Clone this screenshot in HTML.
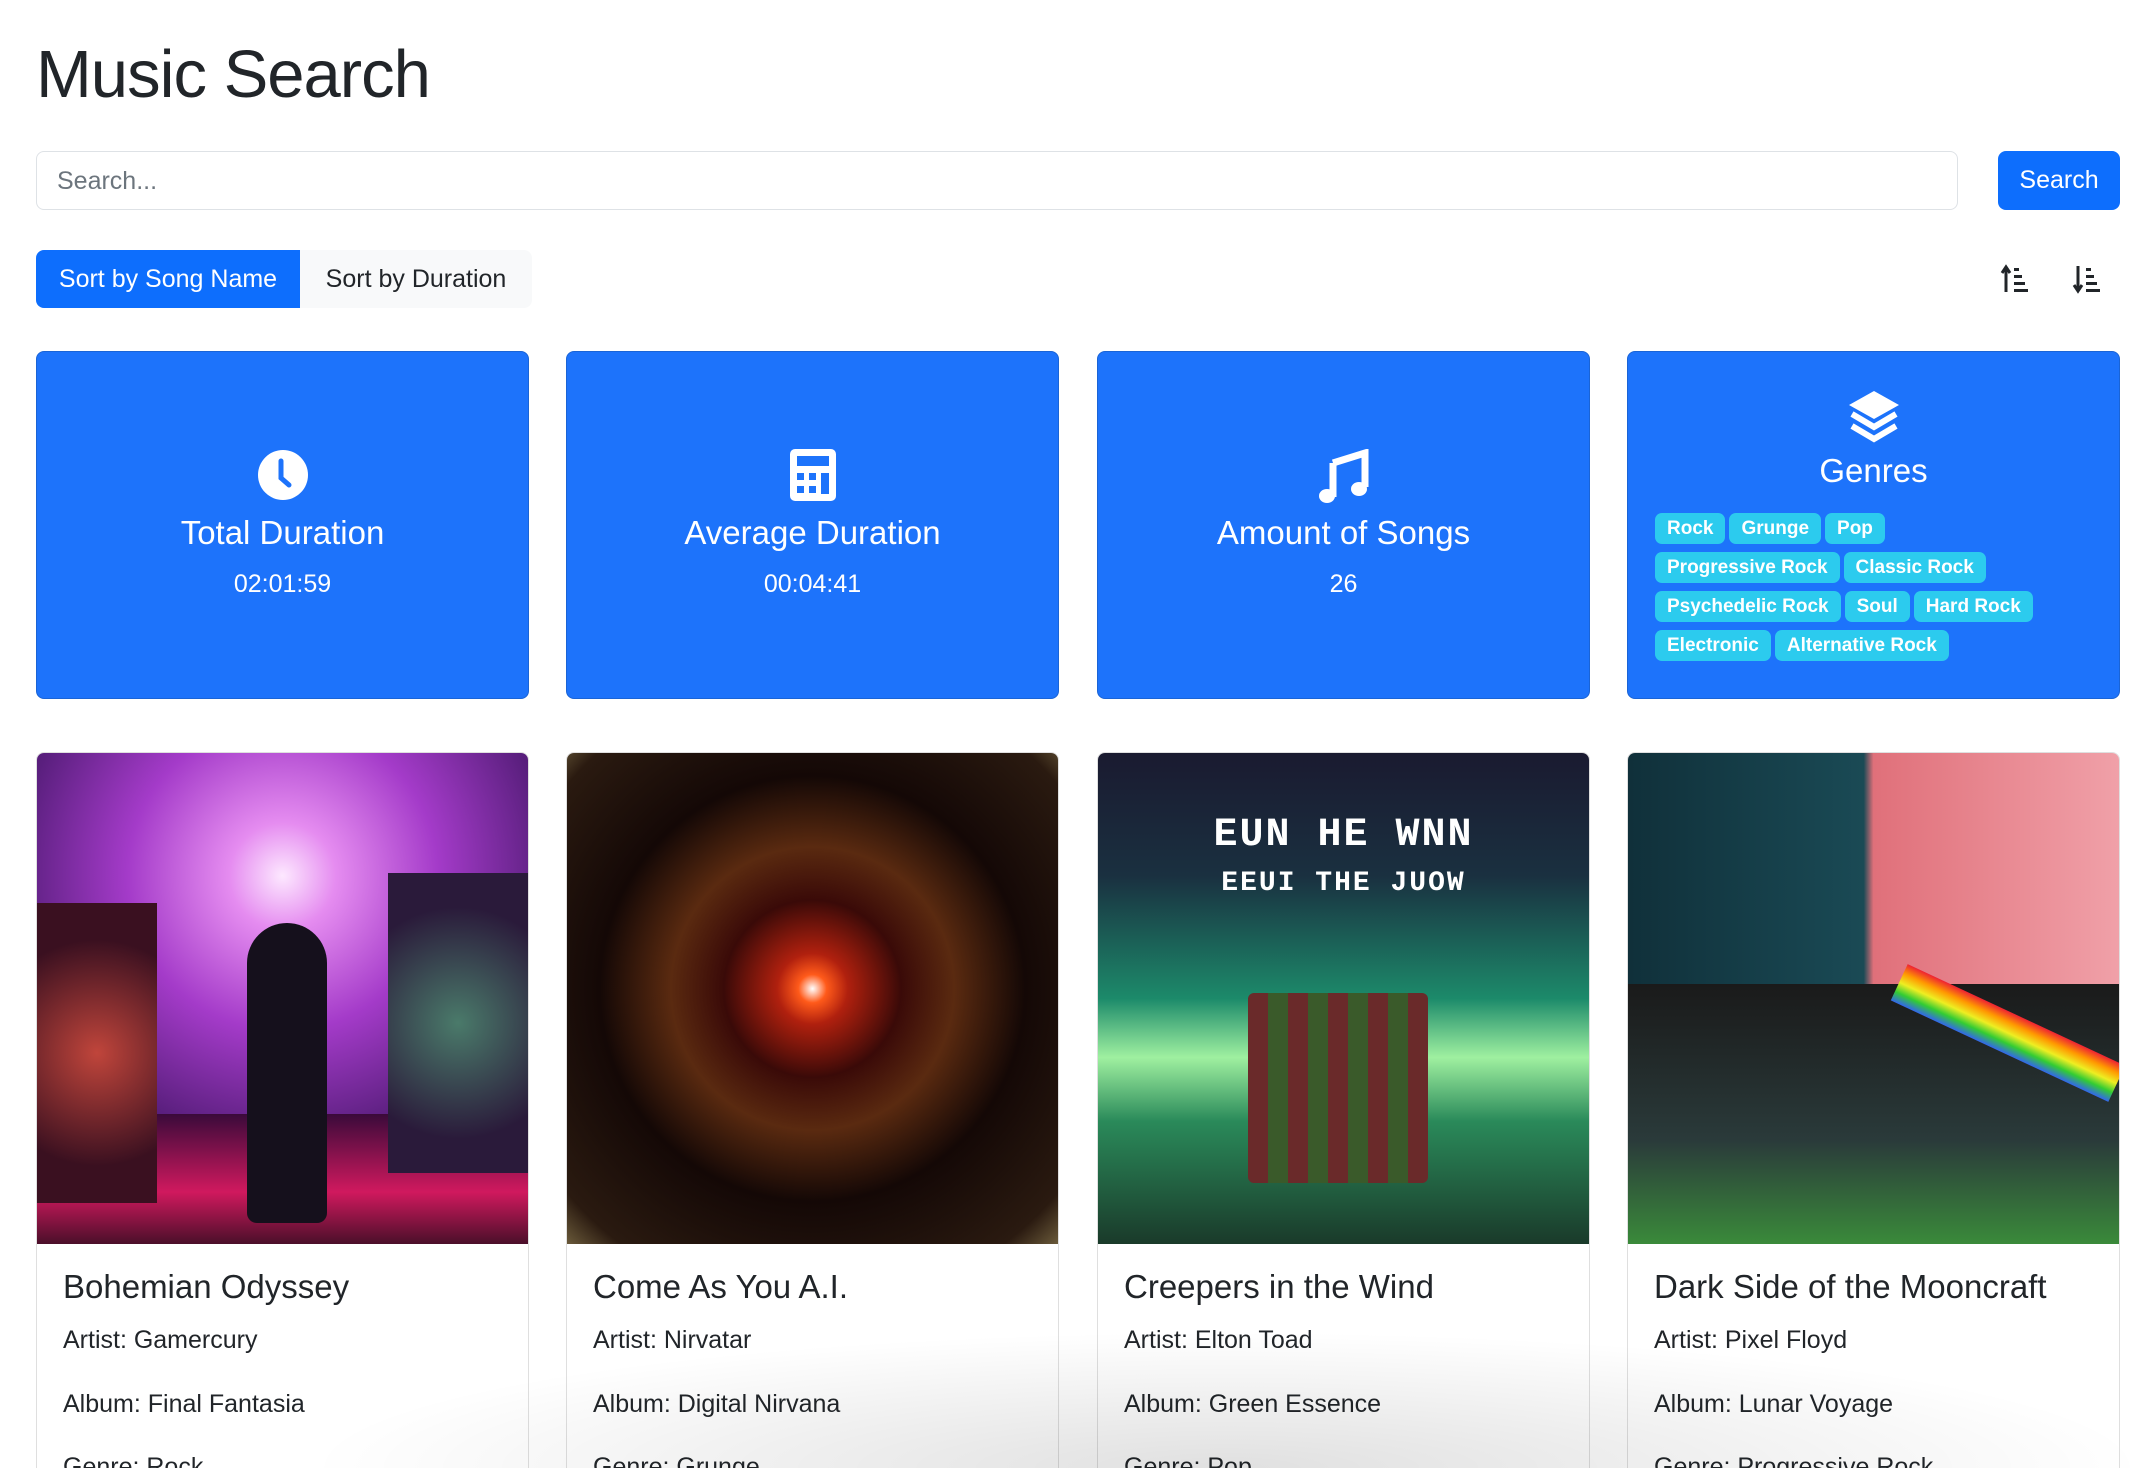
<!DOCTYPE html>
<html><head><meta charset="utf-8"><style>
*{box-sizing:border-box;margin:0;padding:0}
html,body{width:2154px;height:1468px;overflow:hidden}
body{background:#fff;font-family:"Liberation Sans",sans-serif;color:#212529;position:relative}
.abs{position:absolute}
h1{position:absolute;left:36px;top:36px;font-size:67px;font-weight:500;letter-spacing:-1px}
.search{left:36px;top:151px;width:1922px;height:59px;border:1.5px solid #dee2e6;border-radius:8px;font-size:25px;color:#6c757d;padding:15px 20px}
.sbtn{left:1998px;top:151px;width:122px;height:59px;background:#0d6efd;border-radius:8px;color:#fff;font-size:25px;text-align:center;line-height:59px}
.sort1{left:36px;top:250px;width:264px;height:58px;background:#0d6efd;color:#fff;border-radius:8px 0 0 8px;font-size:25px;line-height:58px;text-align:center}
.sort2{left:300px;top:250px;width:232px;height:58px;background:#f8f9fa;color:#212529;border-radius:0 8px 8px 0;font-size:25px;line-height:58px;text-align:center}
.stat{top:351px;width:493px;height:348px;background:#1d73fb;border:1.5px solid #1a64d6;border-radius:8px;color:#fff;text-align:center}
.stat .t{position:absolute;left:0;right:0;top:162px;font-size:33px;font-weight:500}
.stat .v{position:absolute;left:0;right:0;top:218px;font-size:25px}
.stat svg{position:absolute;left:50%;transform:translateX(-50%)}
.badges{position:absolute;left:27px;top:161px;width:440px;text-align:left}
.b{display:inline-block;background:#2ccbee;color:#fff;font-size:19px;font-weight:bold;height:31px;line-height:31px;padding:0 12px;border-radius:7px;margin:0 4px 8px 0}
.card{top:752px;width:493px;height:760px;border:1.5px solid #dfdfdf;border-radius:8px;overflow:hidden;background:#fff}
.img{height:491px;width:100%;position:relative;overflow:hidden}
.card h3{position:absolute;left:26px;top:515px;font-size:33px;font-weight:500}
.card p{position:absolute;left:26px;font-size:25px}
.shade{left:300px;top:1330px;width:1854px;height:138px;background:radial-gradient(ellipse at 50% 100%,rgba(0,0,0,.12),rgba(0,0,0,0) 70%)}
</style></head><body>
<h1>Music Search</h1>
<div class="abs search">Search...</div>
<div class="abs sbtn">Search</div>
<div class="abs sort1">Sort by Song Name</div>
<div class="abs sort2">Sort by Duration</div>
<svg class="abs" style="left:2000px;top:264px" width="30" height="30" viewBox="0 0 30 30"><path d="M6 28V4M2 9l4-6 4 6" stroke="#212529" stroke-width="3" fill="none"/><rect x="14" y="4" width="5" height="3" fill="#212529"/><rect x="14" y="11" width="8" height="3" fill="#212529"/><rect x="14" y="18" width="11" height="3" fill="#212529"/><rect x="14" y="25" width="14" height="3" fill="#212529"/></svg>
<svg class="abs" style="left:2072px;top:264px" width="30" height="30" viewBox="0 0 30 30"><path d="M6 2v24M2 21l4 6 4-6" stroke="#212529" stroke-width="3" fill="none"/><rect x="14" y="4" width="5" height="3" fill="#212529"/><rect x="14" y="11" width="8" height="3" fill="#212529"/><rect x="14" y="18" width="11" height="3" fill="#212529"/><rect x="14" y="25" width="14" height="3" fill="#212529"/></svg>

<div class="abs stat" style="left:36px"><svg style="top:98px" width="50" height="50" viewBox="0 0 50 50"><circle cx="25" cy="25" r="25" fill="#fff"/><path d="M23 11v17l8 7" stroke="#1d73fb" stroke-width="5" fill="none" stroke-linecap="round"/></svg><div class="t">Total Duration</div><div class="v">02:01:59</div></div>
<div class="abs stat" style="left:566px"><svg style="top:97px" width="46" height="52" viewBox="0 0 46 52"><rect width="46" height="52" rx="5" fill="#fff"/><rect x="7" y="7" width="32" height="10" fill="#1d73fb"/><g fill="#1d73fb"><rect x="7" y="24" width="7" height="7"/><rect x="19" y="24" width="7" height="7"/><rect x="31" y="24" width="8" height="21"/><rect x="7" y="37" width="7" height="7"/><rect x="19" y="37" width="7" height="7"/></g></svg><div class="t">Average Duration</div><div class="v">00:04:41</div></div>
<div class="abs stat" style="left:1097px"><svg style="top:97px" width="54" height="54" viewBox="0 0 54 54"><path d="M16 14L48 4v34" stroke="#fff" stroke-width="7" fill="none"/><path d="M16 14v34" stroke="#fff" stroke-width="7"/><ellipse cx="10" cy="47" rx="8" ry="7" fill="#fff"/><ellipse cx="42" cy="40" rx="8" ry="7" fill="#fff"/></svg><div class="t">Amount of Songs</div><div class="v">26</div></div>
<div class="abs stat" style="left:1627px"><svg style="top:38px" width="54" height="54" viewBox="0 0 54 54"><path d="M27 1L52 15 27 29 2 15z" fill="#fff"/><path d="M5 24l22 13 22-13" stroke="#fff" stroke-width="6" fill="none"/><path d="M5 36l22 13 22-13" stroke="#fff" stroke-width="6" fill="none"/></svg><div class="t" style="top:100px">Genres</div>
<div class="badges"><span class="b">Rock</span><span class="b">Grunge</span><span class="b">Pop</span><br><span class="b">Progressive Rock</span><span class="b">Classic Rock</span><br><span class="b">Psychedelic Rock</span><span class="b">Soul</span><span class="b">Hard Rock</span><br><span class="b">Electronic</span><span class="b">Alternative Rock</span></div></div>

<div class="abs card" style="left:36px"><div class="img" style="background:radial-gradient(circle at 50% 25%,#fde8ff 0,#e58cf0 12%,#a43bc9 35%,#5a1f7e 60%,#2a0d3a 85%)"><div class="abs" style="left:0;right:0;bottom:0;height:130px;background:linear-gradient(#3a0a3a,#d0195e 60%,#4a0f2a)"></div><div class="abs" style="left:210px;top:170px;width:80px;height:300px;background:#15101c;border-radius:40px 40px 10px 10px"></div><div class="abs" style="left:0;top:150px;width:120px;height:300px;background:radial-gradient(circle,#c0453b,#3a1020 70%)"></div><div class="abs" style="right:0;top:120px;width:140px;height:300px;background:radial-gradient(circle,#4a7a6a,#2a1a3a 70%)"></div></div>
<h3>Bohemian Odyssey</h3><p style="top:573px">Artist: Gamercury</p><p style="top:637px">Album: Final Fantasia</p><p style="top:700px">Genre: Rock</p></div>
<div class="abs card" style="left:566px"><div class="img" style="background:radial-gradient(circle at 50% 48%,#fff 0,#ff5a1a 4%,#b0200e 10%,#3a0a08 25%,#5a2a10 40%,#140806 60%,#2a1a10 90%,#6a5a3a)"></div>
<h3>Come As You A.I.</h3><p style="top:573px">Artist: Nirvatar</p><p style="top:637px">Album: Digital Nirvana</p><p style="top:700px">Genre: Grunge</p></div>
<div class="abs card" style="left:1097px"><div class="img" style="background:linear-gradient(#1a1a30 0,#1a3040 25%,#1c8a6a 50%,#9ff0a0 62%,#2a8a5a 75%,#1a3a2a 100%)"><div class="abs" style="left:150px;top:240px;width:180px;height:190px;background:#5a2a2a;border-radius:6px;background-image:repeating-linear-gradient(90deg,#6a2a2a 0 20px,#3a5a2a 20px 40px)"></div><div class="abs" style="left:0;right:0;top:60px;text-align:center;color:#fff;font:bold 40px 'Liberation Mono',monospace;letter-spacing:2px">EUN HE WNN<br><span style="font-size:28px">EEUI THE JUOW</span></div></div>
<h3>Creepers in the Wind</h3><p style="top:573px">Artist: Elton Toad</p><p style="top:637px">Album: Green Essence</p><p style="top:700px">Genre: Pop</p></div>
<div class="abs card" style="left:1627px"><div class="img" style="background:linear-gradient(90deg,#10303a 0,#1a4a55 48%,#e0707a 50%,#f0a0a8 100%)"><div class="abs" style="left:0;right:0;bottom:0;height:260px;background:linear-gradient(#1a1a1a,#2a3a3a 60%,#3a8a3a)"></div><div class="abs" style="left:260px;top:260px;width:240px;height:40px;background:linear-gradient(#e23,#f90,#ee2,#3c3,#36e);transform:rotate(25deg)"></div></div>
<h3>Dark Side of the Mooncraft</h3><p style="top:573px">Artist: Pixel Floyd</p><p style="top:637px">Album: Lunar Voyage</p><p style="top:700px">Genre: Progressive Rock</p></div>
<div class="abs shade"></div>
</body></html>
